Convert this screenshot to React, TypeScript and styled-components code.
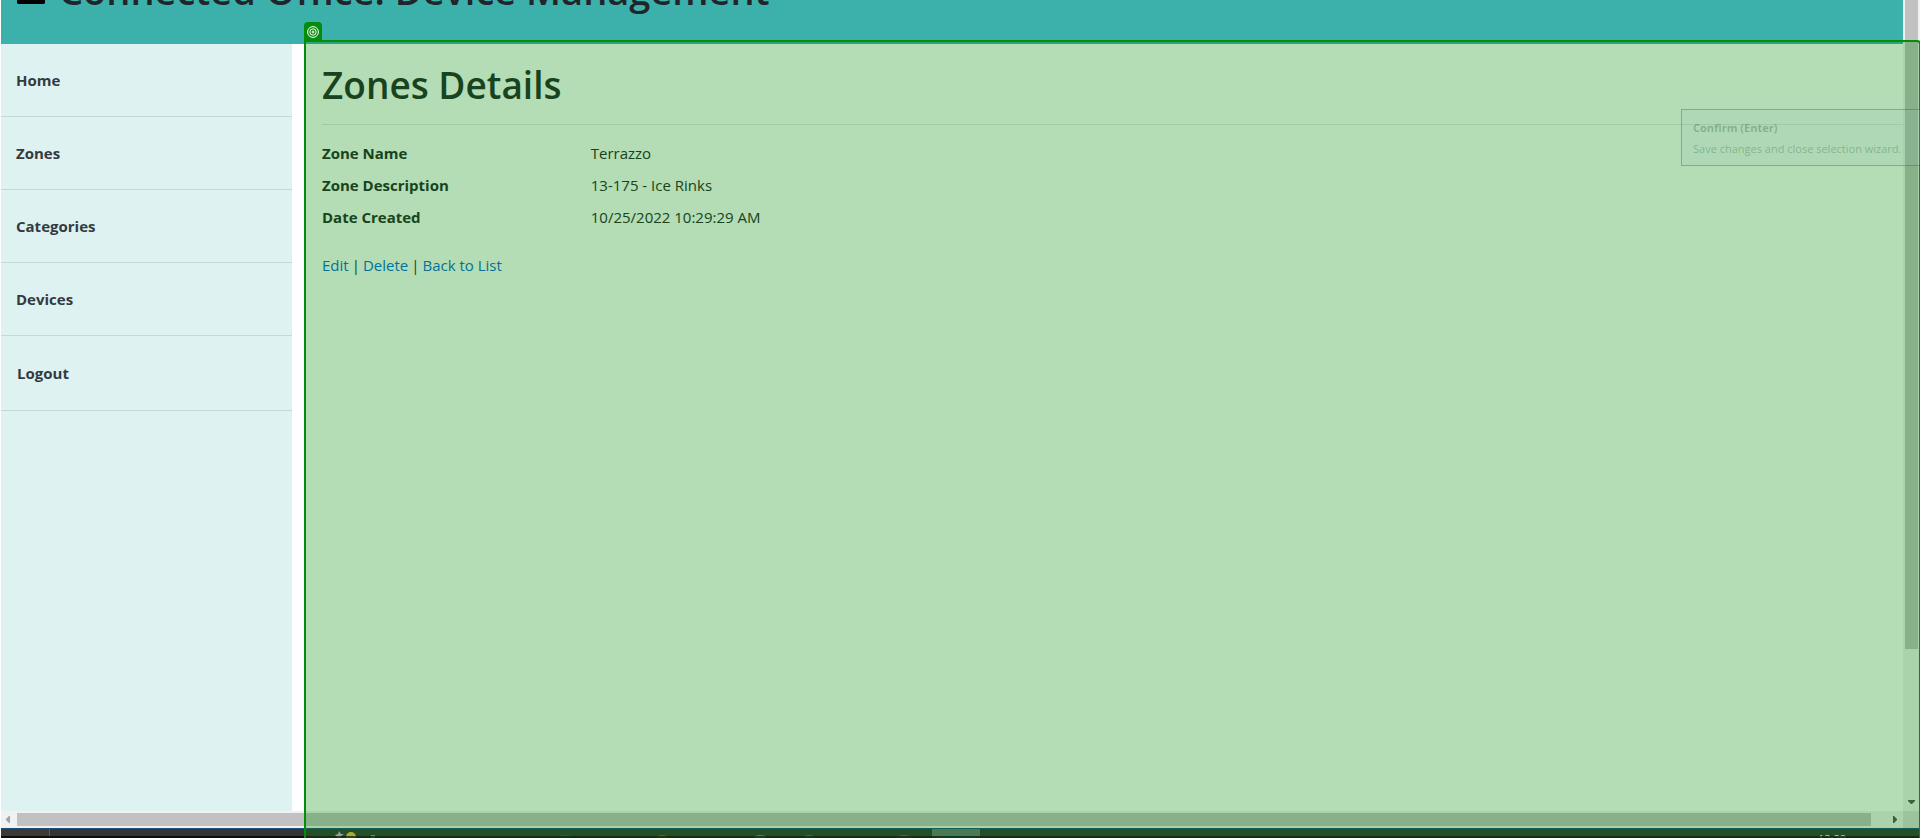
import React from 'react';
import styled, { createGlobalStyle } from 'styled-components';

const GlobalStyle = createGlobalStyle`
  *, *::before, *::after { box-sizing: border-box; }
  body { margin: 0; background: #fff; color: #212529; font: 400 15px/24px "Open Sans", "Noto Sans", sans-serif; }
`;

const Screen = styled.div`
  position: relative;
  display: flex;
  flex-direction: column;
  height: 100vh;
  overflow: hidden;
  padding-left: 1px;
`;

const Viewport = styled.div`
  flex: 1;
  display: flex;
  min-height: 0;
`;

const Page = styled.div`
  flex: 1;
  display: flex;
  flex-direction: column;
  min-width: 0;
`;

const Header = styled.header`
  display: flex;
  align-items: flex-end;
  gap: 14px;
  height: 44px;
  padding: 0 16px 28px;
  overflow: hidden;
  background: #3cb0ab;
`;

const MenuButton = styled.button`
  display: flex;
  flex-direction: column;
  justify-content: flex-end;
  flex: none;
  width: 28px;
  margin-bottom: 12px;
  padding: 0;
  border: 0;
  background: none;
`;

const SiteTitle = styled.h1`
  flex: none;
  margin: 0;
  font-size: 38px;
  line-height: 52px;
  font-weight: 600;
`;

const Columns = styled.div`
  flex: 1;
  display: flex;
  gap: 12px;
`;

const Sidebar = styled.nav`
  width: 291px;
  flex: none;
  background: #def2f1;
`;

const NavList = styled.ul`
  margin: 0;
  padding: 0;
  list-style: none;
`;

const NavItem = styled.li`
  border-bottom: 1px solid #c3d8d7;
`;

const NavLink = styled.a`
  display: block;
  padding: 24px 15px;
  color: #343a40;
  font-weight: 700;
  text-decoration: none;
`;

const NavButton = styled.button`
  display: block;
  width: 100%;
  padding: 24px 15px;
  border: 1px solid transparent;
  background: none;
  color: #343a40;
  font: inherit;
  font-weight: 700;
  text-align: left;
`;

const Main = styled.main`
  flex: 1;
  min-width: 0;
  padding: 17px 0 0 18px;
`;

const Heading = styled.h1`
  margin: 0 0 15px;
  font-size: 37px;
  line-height: 48px;
  font-weight: 600;
`;

const Rule = styled.hr`
  margin: 0 0 16px;
  border: 0;
  border-top: 1px solid #e5e5e5;
`;

const Details = styled.dl`
  display: grid;
  grid-template-columns: 17% 1fr;
  row-gap: 8px;
  margin: 0 0 24px;
`;

const Term = styled.dt`
  font-weight: 700;
`;

const Value = styled.dd`
  margin: 0;
`;

const Actions = styled.div`
  display: flex;
  gap: 3px;
`;

const Action = styled.a`
  color: #0366d6;
  text-decoration: none;
`;

const VScroll = styled.div`
  display: flex;
  flex-direction: column;
  justify-content: space-between;
  align-items: center;
  width: 17px;
  padding-bottom: 7px;
  background: #f1f1f1;
`;

const VThumb = styled.div`
  width: 13px;
  height: calc(80% + 6px);
  background: #c1c1c1;
`;

const HScroll = styled.div`
  flex: none;
  display: flex;
  align-items: center;
  height: 17px;
  background: #f1f1f1;
`;

const ScrollArrow = styled.svg`
  display: block;
  flex: none;
`;

const HTrack = styled.div`
  flex: 1;
`;

const HThumb = styled.div`
  width: calc(100% - 16px);
  height: 13px;
  background: #c1c1c1;
`;

const ScrollCorner = styled.div`
  width: 17px;
  height: 17px;
  background: #dcdcdc;
`;

const Taskbar = styled.footer`
  position: relative;
  flex: none;
  height: 10px;
  overflow: hidden;
  background: #333435;
  border-top: 1px solid #1c4f7c;
`;

const TaskbarEdge = styled.div`
  position: absolute;
  inset: auto 0 0;
  height: 2px;
  background: rgba(0, 0, 0, 0.75);
`;

const TaskbarIcons = styled.svg`
  display: block;
`;

const Clock = styled.time`
  position: absolute;
  top: 2px;
  right: 74px;
  color: #fff;
  font-size: 11px;
  line-height: 16px;
`;

const Selection = styled.div`
  position: absolute;
  inset: 40px -1px -2px 304px;
  border: 2px solid #058c0a;
  border-radius: 0 4px 0 0;
  background: rgba(5, 140, 10, 0.3);
`;

const Target = styled.div`
  position: absolute;
  left: -2px;
  top: -20px;
  display: grid;
  place-items: center;
  width: 18px;
  height: 20px;
  border-radius: 4px 4px 0 0;
  background: #058c0a;
`;

const Hint = styled.aside`
  position: absolute;
  top: 109px;
  right: -4px;
  width: 243px;
  padding: 7px 11px 6px;
  border: 1px solid rgba(40, 90, 50, 0.35);
  background: rgba(150, 200, 190, 0.13);
  color: rgba(50, 100, 60, 0.35);
  font-size: 11px;
  line-height: 21px;
  white-space: nowrap;
`;

const HintTitle = styled.strong`
  display: block;
  font-weight: 700;
`;

const links = ['Home', 'Zones', 'Categories', 'Devices'];

const details = [
  ['Zone Name', 'Terrazzo'],
  ['Zone Description', '13-175 - Ice Rinks'],
  ['Date Created', '10/25/2022 10:29:29 AM'],
];

export default function App() {
  return (
    <Screen>
      <GlobalStyle />
      <Viewport>
        <Page>
          <Header>
            <MenuButton aria-label="Toggle menu">
              <svg width="28" height="22" viewBox="0 0 28 22">
                <path d="M1 0h26v4H1zM1 9h26v4H1zM0 17h28v4l-1 1H1l-1-1z" />
              </svg>
            </MenuButton>
            <SiteTitle>Connected Office: Device Management</SiteTitle>
          </Header>
          <Columns>
            <Sidebar>
              <NavList>
                {links.map((name) => (
                  <NavItem key={name}>
                    <NavLink href="#">{name}</NavLink>
                  </NavItem>
                ))}
                <NavItem>
                  <NavButton>Logout</NavButton>
                </NavItem>
              </NavList>
            </Sidebar>
            <Main>
              <Heading>Zones Details</Heading>
              <Rule />
              <Details>
                {details.map(([term, value]) => (
                  <React.Fragment key={term}>
                    <Term>{term}</Term>
                    <Value>{value}</Value>
                  </React.Fragment>
                ))}
              </Details>
              <Actions>
                <Action href="#">Edit</Action>
                <span>|</span>
                <Action href="#">Delete</Action>
                <span>|</span>
                <Action href="#">Back to List</Action>
              </Actions>
            </Main>
          </Columns>
        </Page>
        <VScroll>
          <VThumb />
          <ScrollArrow width="7" height="4" viewBox="0 0 7 4">
            <path d="M0 0h7v1L4 4H3L0 1z" fill="#505050" />
          </ScrollArrow>
        </VScroll>
      </Viewport>
      <HScroll>
        <ScrollArrow width="16" height="17" viewBox="0 0 16 17">
          <path d="M9 5v7H8L5 9V8l3-3z" fill="#a3a3a3" />
        </ScrollArrow>
        <HTrack>
          <HThumb />
        </HTrack>
        <ScrollArrow width="16" height="17" viewBox="0 0 16 17">
          <path d="M6 5v7h1l3-3V8L7 5z" fill="#505050" />
        </ScrollArrow>
        <ScrollCorner />
      </HScroll>
      <Taskbar>
        <TaskbarIcons width="1000" height="9" viewBox="0 0 1000 9">
          <path d="M0 0h48v9H0z" fill="#3b3835" />
          <path d="M48 0h1v9h-1z" fill="#5a5d60" />
          <path d="m338 2 2 3h3l-3 2-1 2h-2l-3-3 3-1z" fill="#d9a5dc" />
          <circle cx="350" cy="8" r="5" fill="#f4b64a" />
          <path d="M370 6h4v3h-4z" fill="#36b8a0" />
          <path d="M931 0h48v9h-48z" fill="#6b7075" />
          <path d="M944 6h25v3h-25z" fill="#2084b8" />
          <ellipse cx="564" cy="9" rx="8" ry="3" fill="#16604c" />
          <ellipse cx="661" cy="9" rx="6" ry="3" fill="#95501e" />
          <ellipse cx="759" cy="9" rx="7" ry="3" fill="#5a8d94" />
          <ellipse cx="808" cy="9" rx="6" ry="3" fill="#356a9c" />
          <ellipse cx="903" cy="9" rx="8" ry="3" fill="#6d5360" />
        </TaskbarIcons>
        <Clock>12:20</Clock>
        <TaskbarEdge />
      </Taskbar>
      <Selection>
        <Target>
          <svg width="12" height="12" viewBox="0 0 12 12" fill="none" stroke="#fff">
            <circle cx="6" cy="6" r="5.4" />
            <circle cx="6" cy="6" r="3.2" />
            <circle cx="6" cy="6" r="1" />
          </svg>
        </Target>
      </Selection>
      <Hint>
        <HintTitle>Confirm (Enter)</HintTitle>
        Save changes and close selection wizard.
      </Hint>
    </Screen>
  );
}
